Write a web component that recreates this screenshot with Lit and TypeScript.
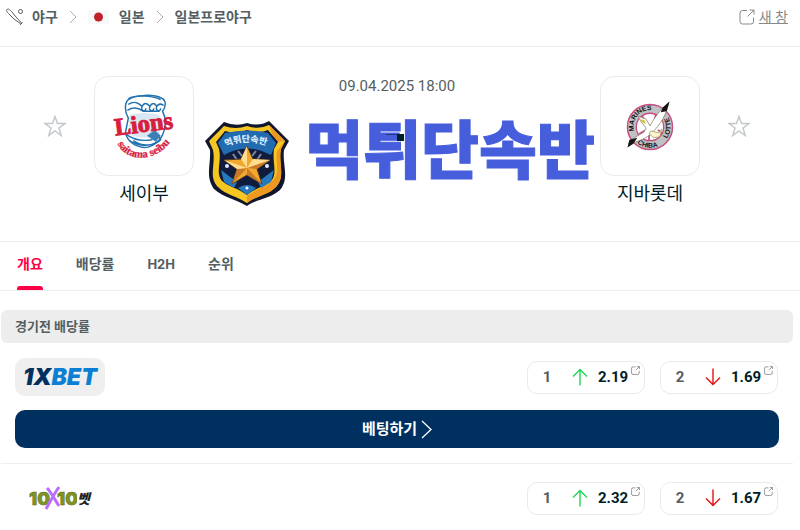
import { LitElement, html, svg, css } from "lit";
import { customElement, property } from "lit/decorators.js";

const externalIcon = html`<svg class="ext" viewBox="0 0 16 16" aria-hidden="true">
  <path d="M8 1.5H3.5a2.500 2.500 0 0 0-2.500 2.500v8.500a2.500 2.500 0 0 0 2.500 2.500H12a2.500 2.500 0 0 0 2.500-2.500V8.500M10.500 1h4.500v4.500M15 1 8.500 7.500" fill="none" stroke="currentColor"/>
</svg>`;

const chevron = html`<svg class="chevron" viewBox="0 0 8 14" aria-hidden="true">
  <path d="M1 1l6 6-6 6" fill="none" stroke="currentColor"/>
</svg>`;

@customElement("odds-link")
export class OddsLink extends LitElement {
  @property() pick = "";
  @property() odds = "";
  @property() trend: "up" | "down" = "up";

  static styles = css`
    :host { display: block; }
    a {
      display: flex;
      align-items: center;
      box-sizing: border-box;
      width: 118px;
      height: 33px;
      padding: 0 4px 0 14px;
      border: 1px solid #e9eaea;
      border-radius: 10px;
      background: #fff;
      color: #001e28;
      font: 700 15px/20px Roboto, "Noto Sans CJK KR", sans-serif;
      text-decoration: none;
    }
    .pick { color: #555e61; width: 10px; text-align: center; }
    .arrow { width: 16px; height: 18px; margin-left: 20px; flex: none; }
    .up { stroke: #1fd655; }
    .down { stroke: #e81010; }
    .value { flex: 1; margin-left: 10px; }
    .ext { width: 9px; height: 9px; flex: none; align-self: flex-start; margin-top: 4px; color: #777; stroke-width: 1.3; }
  `;

  render() {
    const d = this.trend === "up" ? "M8 17.500V1.500M1 8.500l7-7 7 7" : "M8 .5v16M1 9.500l7 7 7-7";
    return html`<a href="#bet">
      <span class="pick">${this.pick}</span>
      <svg class="arrow ${this.trend}" viewBox="0 0 16 18" fill="none" stroke-width="1.4" aria-hidden="true"><path d=${d}/></svg>
      <span class="value">${this.odds}</span>
      ${externalIcon}
    </a>`;
  }
}

const lionsLogo = svg`<svg class="crest" viewBox="0 0 100 100" role="img" aria-label="Lions">
  <g fill="none" stroke="#2272b0" stroke-width="1.500">
    <path fill="#fff" d="M34 42c-4-7-4-15 0-19 8-5 25-6 35-1 4 3 3 9 0 13 4 8 4 15 0 24-3 7-11 13-19 13-10-1-17-7-19-15z"/>
    <path d="M34 22c8-4 24-3 33 1M34 28c6-4 10-2 14 2 2-4 5-4 8 0 2-4 5-4 7 0 2-3 4-3 7-1M48 30c-2 5 4 6 4 2M56 30c-2 5 4 6 4 2M63 30c-2 5 4 6 4 2M33 34c5-3 11-3 16 1h17"/>
    <path d="M31 58c8 6 16 8 27 6l3-9 6 9c-6 6-18 8-28 1M35 65c8 5 20 7 29 1M59 56l4 4-1 5"/>
  </g>
  <path d="M35 39c8-3 22-3 31 0v20c-9 4-22 4-31 0z" fill="#d9e8f3"/>
  <path d="M53 60l8-6 6 6-5 6z" fill="#3d80b6"/>
  <text class="lions" x="20" y="56" transform="rotate(-7 50 50)">Lions</text>
  <path id="lions-arc" d="M23 68C32 88 67 89 82 58" fill="none"/>
  <text class="saitama"><textPath href="#lions-arc">saitama seibu</textPath></text>
</svg>`;

const marinesLogo = svg`<svg class="crest" viewBox="0 0 100 100" role="img" aria-label="Chiba Lotte Marines">
  <circle cx="50" cy="51" r="23" fill="#c0c1c3" stroke="#c64d80" stroke-width="1.500"/>
  <circle cx="50" cy="51" r="14" fill="#fff" stroke="#c64d80" stroke-width="1.300"/>
  <path d="M42 40l5 8M56 38l-2 9M39 58l7-4M49 58v7M58 54l5 4M60 43l-6 5" stroke="#c64d80" stroke-width="1.800"/>
  <path id="marines-arc" d="M34 55A16.500 16.500 0 0 1 58 36" fill="none"/>
  <path id="chiba-arc" d="M37 67.500A21 21 0 0 0 66 65" fill="none"/>
  <path id="lotte-arc" d="M67 63A21 21 0 0 0 66 37" fill="none"/>
  <text class="ring"><textPath href="#marines-arc">MARINES</textPath></text>
  <text class="ring"><textPath href="#chiba-arc">CHIBA</textPath></text>
  <text class="ring"><textPath href="#lotte-arc">LOTTE</textPath></text>
  <path d="M69 26c-2 12-8 22-17 31-6 6-13 8-19 10l-5 1c4-6 10-8 16-12l2-4-5-6-3-6 8 3 4 7c4-8 10-16 19-24z" fill="#fff" stroke="#77735f" stroke-width=".7"/>
  <path d="M51 55l8 2 3-4-2 8-6 1-5-4z" fill="#fbf6cb" stroke="#928a50" stroke-width=".7"/>
  <path d="M39 43l5 1 2 4-3-1z" fill="#d6bf42"/>
  <path d="M70 25l-7 6-2 5 6-1zM27 72l2-8 8-2-4 6z" fill="#151515"/>
</svg>`;

const shield = svg`<svg class="shield" viewBox="0 0 86 87" aria-hidden="true">
  <path d="M1 21L20 2q12 5 23 1 12 4 22-2l20 20-5 9c-2 14 6 28-4 40C66 79 52 79 43 86 32 79 20 78 10 69 1 57 7 44 6 30z" fill="#10162c"/>
  <path d="M5 21L20 6q12 4 23 0 12 4 22-1l16 16-4 8c-3 14 5 27-5 38-8 8-20 9-29 16-10-7-21-8-29-16C4 57 12 44 9 30z" fill="#f6c622"/>
  <path d="M43 76c10-8 20-8 27-17 6-8 1-17 3-28l8-10-10 1-6-17 16 16-4 8c-3 14 5 27-5 38-8 8-20 9-29 16z" fill="#ed9820"/>
  <path d="M12 22l9-11q12 4 22-1 12 4 21 0l10 12-4 7c-2 13 4 25-3 32-7 6-16 7-24 14-9-7-18-8-25-14-7-8 0-20-3-32z" fill="#111b3b"/>
  <path d="M14 23l7-10q22-5 43 0l8 10-5 12Q43 22 20 35z" fill="#236bb1"/>
  <path id="shield-arc" d="M22 27Q43 17 66 27" fill="none"/>
  <text class="badge"><textPath href="#shield-arc">먹튀단속반</textPath></text>
  <path d="M17 50l16 12-3 6-10-6zM70 50L54 62l3 6 10-6zM34 68q9-6 18 0l-9 7z" fill="#2779be"/>
  <path d="M29 34l4 6M34 31l4 5M57 34l-4 6M52 31l-4 5" stroke="#7d8ba5" stroke-width="2"/>
  <path d="M43 26l6 13 17 1-13 9 5 15-15-9-15 9 5-15-13-9 17-1z" fill="#f0a92d" stroke="#593821"/>
  <path d="M66 40L43 48l10 1zM58 64L43 48v7zM28 64l15-16-10 1z" fill="#c97a28"/>
  <path d="M43 26v22l-6-9zM20 40l23 8-10 1zM66 40L43 48l6-9z" fill="#ffdc90"/>
  <circle cx="23" cy="46" r="2" fill="#e4ecfa"/><circle cx="63" cy="46" r="2" fill="#e4ecfa"/><circle cx="43" cy="68" r="1.500" fill="#fff"/>
</svg>`;

const star = html`<svg viewBox="0 0 22 22" aria-hidden="true">
  <path d="M11 1.500l2.500 7H21l-6 4.500 2.200 7.500L11 16l-6.200 4.500L7 13 1 8.500h7.500z" fill="none" stroke="#c3c8ca" stroke-width="1.500"/>
</svg>`;

@customElement("app-root")
export class AppRoot extends LitElement {
  static styles = css`
    :host {
      display: block;
      background: #fff;
      color: #001e28;
      font: 14px/20px Roboto, "Noto Sans CJK KR", sans-serif;
    }
    a { color: inherit; text-decoration: none; }
    button { border: 0; padding: 0; background: none; color: inherit; font: inherit; cursor: pointer; }
    svg { display: block; flex: none; }

    .crumbs {
      display: flex;
      align-items: center;
      gap: 11px;
      box-sizing: border-box;
      height: 47px;
      padding: 0 12px 12px 6px;
      border-bottom: 1px solid #eee;
      color: #555e61;
      font-weight: 700;
    }
    .sport { display: flex; align-items: center; gap: 8px; }
    .bat { width: 18px; height: 18px; }
    .flag { width: 21px; height: 14px; }
    .country { display: flex; align-items: center; gap: 10px; }
    .chevron { width: 8px; height: 14px; color: #aaa; }
    .window { display: flex; align-items: center; gap: 4px; margin-left: auto; color: #888; font-weight: 400; }
    .window span { text-decoration: underline; }
    .window .ext { width: 16px; height: 16px; }

    .hero {
      display: flex;
      align-items: flex-start;
      box-sizing: border-box;
      height: 195px;
      padding: 29px 50px 0 44px;
      border-bottom: 1px solid #eee;
    }
    .fav { margin-top: 39px; }
    .fav svg { width: 22px; height: 22px; }
    .team { width: 100px; text-align: center; font-size: 18px; line-height: 36px; font-weight: 400; }
    .team.home { margin-left: 28px; }
    .team.away { margin-right: 28px; }
    .tile { box-sizing: border-box; height: 100px; border: 1px solid #e9eaea; border-radius: 14px; }
    .crest { width: 98px; height: 98px; }
    .lions { font: 700 25px "Liberation Serif", serif; fill: #d81e3f; stroke: #d81e3f; stroke-width: 1px; }
    .saitama { font: 700 11px "Liberation Serif", serif; fill: #d81e3f; stroke: #d81e3f; stroke-width: 0.3px; }
    .ring { font: 700 7px "Liberation Sans", sans-serif; fill: #111; }

    .center { position: relative; flex: 1; text-align: center; }
    time { display: block; color: #555e61; font-size: 15px; line-height: 20px; }
    .brand { display: flex; align-items: flex-start; justify-content: space-between; margin-top: 24px; padding: 0 5px 0 10px; }
    .shield { width: 86px; height: 87px; }
    .badge { font: 900 9px "Noto Sans CJK KR", sans-serif; fill: #d9edff; }
    .brand strong { color: #465edc; font: 900 63px/52px "Noto Sans CJK KR", sans-serif; -webkit-text-stroke: 1px #465edc; white-space: nowrap; }
    .score { position: absolute; top: 58px; left: 50%; width: 7px; height: 7px; background: #001e28; }
    .score::before { content: ""; position: absolute; top: 0; right: 100%; width: 11px; height: 1px; background: #26367f; }

    .tabs {
      display: flex;
      gap: 33px;
      box-sizing: border-box;
      height: 49px;
      padding: 0 17px;
      border-bottom: 1px solid #eee;
      color: #555e61;
    }
    .tabs button { font-weight: 700; border-bottom: 4px solid transparent; }
    .tabs .latin { font-family: Inter, sans-serif; font-size: 13px; }
    .tabs .active { position: relative; color: #ff0046; }
    .tabs .active::after { content: ""; position: absolute; inset: auto 0 -4px; height: 4px; border-radius: 3px 3px 0 0; background: #ff0046; }

    .odds { margin: 19px 7px 0 1px; }
    h2 { margin: 0; padding: 0 14px; border-radius: 6px; background: #ededed; color: #555e61; font-size: 13px; font-weight: 700; line-height: 33px; }
    .book { padding: 15px 14px; border-bottom: 1px solid #eee; }
    .book:last-child { border: 0; }
    .line { display: flex; align-items: center; gap: 15px; height: 38px; padding-right: 1px; }
    .maker { margin-right: auto; }
    .onex { display: block; box-sizing: border-box; width: 90px; height: 38px; border-radius: 10px; background: #efefef; text-align: center; font: italic 900 23px/38px Inter, sans-serif; color: #0b7fd3; }
    .onex b { color: #03305f; font-weight: 900; }
    .tenx { display: flex; align-items: center; padding-left: 14px; }
    .tenx svg { width: 48px; height: 26px; }
    .ten { font: 900 18px Inter, sans-serif; fill: #7f9423; stroke: #596b18; stroke-width: 0.5px; }
    .tenx span { font: italic 900 14px/20px "Noto Sans CJK KR", sans-serif; color: #222; }
    .bet {
      display: flex;
      align-items: center;
      justify-content: center;
      gap: 4px;
      height: 38px;
      margin-top: 14px;
      border-radius: 10px;
      background: #00305f;
      color: #fff;
      font-size: 15px;
      font-weight: 700;
    }
    .bet .chevron { width: 11px; height: 19px; color: #fff; }
  `;

  render() {
    return html`
      <nav class="crumbs" aria-label="breadcrumb">
        <a class="sport" href="#baseball">
          <svg class="bat" viewBox="0 0 18 18" fill="none" stroke="#555e61" aria-hidden="true">
            <path d="M1 1.500C2 0 4 2 6 4l4 5 5.500 6-.8.800L8 11 2.500 5.500C1 4 0 2.500 1 1.500zM14 17l2.500-2.500"/><circle cx="14.500" cy="3.500" r="2"/>
          </svg>야구</a>
        ${chevron}
        <a class="country" href="#japan">
          <svg class="flag" viewBox="0 0 21 14" aria-hidden="true"><path d="M0 0h21v14H0z" fill="#f8f8f8"/><circle cx="10.500" cy="7" r="4.500" fill="#c1202b"/></svg>일본</a>
        ${chevron}
        <a href="#npb">일본프로야구</a>
        <a class="window" href="#window">${externalIcon}<span>새 창</span></a>
      </nav>

      <section class="hero">
        <button class="fav" aria-label="세이부">${star}</button>
        <div class="team home"><div class="tile">${lionsLogo}</div>세이부</div>
        <div class="center">
          <time datetime="2025-04-09T18:00">09.04.2025 18:00</time>
          <div class="brand">${shield}<strong>먹튀단속반</strong></div>
          <span class="score"></span>
        </div>
        <div class="team away"><div class="tile">${marinesLogo}</div>지바롯데</div>
        <button class="fav" aria-label="지바롯데">${star}</button>
      </section>

      <nav class="tabs">
        <button class="active">개요</button>
        <button>배당률</button>
        <button class="latin">H2H</button>
        <button>순위</button>
      </nav>

      <section class="odds">
        <h2>경기전 배당률</h2>
        <div class="book">
          <div class="line">
            <a class="maker onex" href="#1xbet"><b>1X</b>BET</a>
            <odds-link pick="1" odds="2.19" trend="up"></odds-link>
            <odds-link pick="2" odds="1.69" trend="down"></odds-link>
          </div>
          <a class="bet" href="#bet">베팅하기 <svg class="chevron" viewBox="0 0 11 19" aria-hidden="true"><path d="M1 1l9 8.500L1 18" fill="none" stroke="currentColor" stroke-width="1.300"/></svg></a>
        </div>
        <div class="book">
          <div class="line">
            <a class="maker tenx" href="#10x10">
              <svg viewBox="0 0 48 26" aria-hidden="true">
                <text class="ten" x="0" y="20">10</text><text class="ten" x="28" y="20">10</text>
                <path d="M18 3c4 4 8 12 12 18M30 2C25 9 21 17 17 24" fill="none" stroke="#bb6cff" stroke-width="3"/>
              </svg><span>벳</span></a>
            <odds-link pick="1" odds="2.32" trend="up"></odds-link>
            <odds-link pick="2" odds="1.67" trend="down"></odds-link>
          </div>
        </div>
      </section>
    `;
  }
}
